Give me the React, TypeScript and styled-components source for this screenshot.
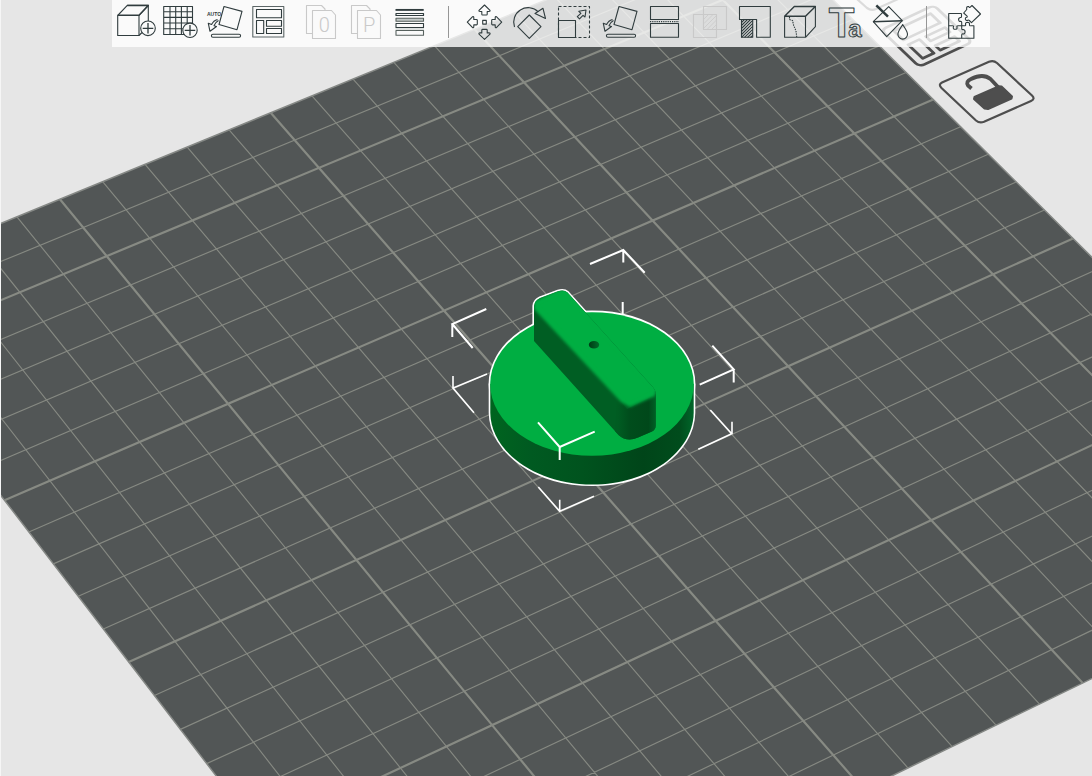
import React from "react";
import styled, { createGlobalStyle, css } from "styled-components";

const GlobalStyle = createGlobalStyle`
  * { box-sizing: border-box; }
  body {
    margin: 0;
    background: #e6e6e6;
    font-family: "Liberation Sans", Arial, sans-serif;
  }
`;

const Workspace = styled.main`
  display: grid;
  grid-template: minmax(100vh, auto) / minmax(0, 1fr);
  overflow: hidden;
  border-left: 1px solid #f6f6f6;
`;

const Viewport = styled.svg`
  grid-area: 1 / 1;
  display: block;
  width: 100%;
  height: 100vh;
`;

const Header = styled.header`
  grid-area: 1 / 1;
  align-self: start;
  z-index: 1;
  display: flex;
  justify-content: center;
  padding-left: 9px;
`;

const Toolbar = styled.div`
  display: flex;
  align-items: center;
  height: 47px;
  padding: 0 5px 0 1px;
  background: rgba(255, 255, 255, 0.8);
`;

const ToolGroup = styled.div<{ $spaced?: boolean }>`
  display: flex;
  margin-left: ${(p) => (p.$spaced ? "6px" : "0")};
`;

const ToolButton = styled.button`
  width: 45px;
  height: 47px;
  padding: 0;
  border: 0;
  background: none;
  color: #303c3e;
  cursor: pointer;
  &:disabled {
    color: #c9c9c9;
    cursor: default;
  }
`;

const Divider = styled.div`
  width: 28px;
  height: 32px;
  margin-bottom: 3px;
  display: flex;
  justify-content: center;
  &::before {
    content: "";
    width: 1px;
    background: #969696;
  }
`;

const Glyph = styled.svg`
  display: block;
  fill: none;
  stroke: currentColor;
  stroke-width: 1.1;
  stroke-linejoin: round;
  text {
    font-family: "Liberation Sans", Arial, sans-serif;
  }
`;

const SheetLetter = styled.text`
  && {
    font-family: Roboto, sans-serif;
  }
  font-weight: 300;
  font-size: 20px;
  text-anchor: middle;
  fill: currentColor;
  stroke: none;
`;

const line = css`
  fill: none;
`;
const MinorLine = styled.path`
  ${line}
  stroke: #868982;
  stroke-width: 1.15;
`;
const MajorLine = styled.path`
  ${line}
  stroke: #878a83;
  stroke-width: 2.2;
`;
const Bracket = styled.path<{ $thin?: boolean }>`
  ${line}
  stroke: #ffffff;
  stroke-width: ${(p) => (p.$thin ? 1.6 : 2)};
`;
const PlateMark = styled.g`
  fill: none;
  stroke: #4e4e4e;
  stroke-linejoin: round;
`;

/* ---------- build plate projection ---------- */

const CELLS = 22;
type Sample = [number, number, number, number];

// plate cell (u, v) -> scene position (x, y)
const SAMPLES: Sample[] = [
  [5, 0, 59.3, 199.3], [10, 0, 271, 113.3],
  [5, 2, 106.7, 256], [10, 2, 319, 167.7], [15, 2, 524, 82.7],
  [0, 7, 5, 499.7], [5, 7, 227.7, 403.7], [15, 7, 652.7, 220.7], [20, 7, 854.7, 133.7], [22, 7, 932.7, 99.3],
  [0, 12, 129.3, 662.3], [5, 12, 356, 559.7], [15, 12, 788.7, 365.7], [20, 12, 993, 274.3], [22, 12, 1073, 238.3],
  [5, 17, 491.7, 725.7], [10, 17, 715.7, 621], [15, 17, 932, 520.3],
  [15, 22, 1082, 683],
];

function fitProjection(samples: Sample[]) {
  const m = Array.from({ length: 8 }, () => new Array(9).fill(0));
  const add = (row: number[], rhs: number) => {
    for (let i = 0; i < 8; i++) {
      for (let j = 0; j < 8; j++) m[i][j] += row[i] * row[j];
      m[i][8] += row[i] * rhs;
    }
  };
  samples.forEach(([a, b, px, py]) => {
    const u = a / CELLS, v = b / CELLS, x = px / 1000, y = py / 1000;
    add([u, v, 1, 0, 0, 0, -u * x, -v * x], x);
    add([0, 0, 0, u, v, 1, -u * y, -v * y], y);
  });
  for (let c = 0; c < 8; c++) {
    let p = c;
    for (let r = c + 1; r < 8; r++) if (Math.abs(m[r][c]) > Math.abs(m[p][c])) p = r;
    [m[c], m[p]] = [m[p], m[c]];
    for (let r = 0; r < 8; r++) {
      if (r === c) continue;
      const f = m[r][c] / m[c][c];
      for (let k = c; k < 9; k++) m[r][k] -= f * m[c][k];
    }
  }
  const h = m.map((row, i) => row[8] / row[i]);
  return (a: number, b: number) => {
    const u = a / CELLS, v = b / CELLS;
    const w = h[6] * u + h[7] * v + 1;
    const x = (1000 * (h[0] * u + h[1] * v + h[2])) / w;
    const y = (1000 * (h[3] * u + h[4] * v + h[5])) / w;
    return `${x.toFixed(2)} ${y.toFixed(2)}`;
  };
}

const at = fitProjection(SAMPLES);
const steps = Array.from({ length: CELLS - 1 }, (_, i) => i + 1);
const across = (v: number) => `M${at(0, v)}L${at(CELLS, v)}`;
const along = (u: number) => `M${at(u, 0)}L${at(u, CELLS)}`;
const minorGrid = steps.map((i) => (i % 5 !== 2 ? across(i) : "") + (i % 5 !== 0 ? along(i) : "")).join("");
const majorGrid = steps.map((i) => (i % 5 === 2 ? across(i) : "") + (i % 5 === 0 ? along(i) : "")).join("");
const plateOutline = `M${at(0, 0)}L${at(CELLS, 0)}L${at(CELLS, CELLS)}L${at(0, CELLS)}Z`;

function Plate() {
  return (
    <g>
      <path d={plateOutline} fill="#525656" />
      <MinorLine d={minorGrid} />
      <MajorLine d={majorGrid} />
      <path d={plateOutline} fill="none" stroke="#858885" strokeWidth="1.5" />
    </g>
  );
}

function PlateMarks() {
  return (
    <PlateMark>
      <path d="M838 -18L867 8Q871 11 876 9L907 -5" strokeWidth="2.2" />
      <g transform="matrix(1.6 -0.75 1.2 1.15 881 30)" strokeWidth="1.7">
        <rect x="0" y="0" width="33" height="32" rx="3" />
        <rect x="5" y="4" width="23" height="8" />
        <rect x="5" y="16" width="7" height="12" />
        <rect x="16" y="16" width="12" height="4" />
        <rect x="16" y="24" width="12" height="4" />
      </g>
      <path
        d="M942 82.5L989 61.8Q993.5 60 997 63L1032 95.5Q1035.5 99 1031 101L984 121.8Q979.5 123.5 976 120.5L941.5 88Q938 84.5 942 82.5Z"
        fill="#e9e9e9"
        strokeWidth="2.2"
      />
      <path d="M971.5 88.5L968 85.5Q965.5 81.5 971 79Q983 73 990.5 79L998 87" strokeWidth="3.8" />
      <path d="M974.5 97L998.5 86.3L1001.5 86.5L1012 96.5L1011.5 98.5L988 109L984.5 108.5L974 99Z" fill="#4e4e4e" strokeWidth="2" />
    </PlateMark>
  );
}

/* ---------- selected model ---------- */

const HANDLE =
  "M534 341V306Q534.5 300.5 540 298L558 291.3Q564 289.5 567.5 292.5L651 385Q655.7 389.5 655.7 394V425.5Q655.7 429.5 652 431.5L638 437.5Q627 442.5 618.5 435Z";
const DISC_SIDE =
  "M490.3 384V413C491 452 536 484.5 592.3 484.5S693 452 693.7 413V384Z";

function Model() {
  return (
    <g>
      <defs>
        <linearGradient id="disc-side" x1="0" x2="1" y1="0" y2="0">
          <stop offset="0" stopColor="#00641f" />
          <stop offset="0.2" stopColor="#005a21" />
          <stop offset="0.45" stopColor="#00531e" />
          <stop offset="0.75" stopColor="#004519" />
          <stop offset="0.93" stopColor="#004c1c" />
          <stop offset="1" stopColor="#00662a" />
        </linearGradient>
        <linearGradient id="handle-end" x1="618" x2="656" y1="0" y2="0" gradientUnits="userSpaceOnUse">
          <stop offset="0" stopColor="#005c22" />
          <stop offset="0.3" stopColor="#004d1c" />
          <stop offset="0.8" stopColor="#00481a" />
          <stop offset="1" stopColor="#006126" />
        </linearGradient>
        <linearGradient id="hole" x1="0" x2="1" y1="0" y2="0">
          <stop offset="0" stopColor="#003a15" />
          <stop offset="1" stopColor="#006b29" />
        </linearGradient>
        <filter id="bevel" x="-10%" y="-10%" width="120%" height="120%">
          <feGaussianBlur stdDeviation="1.8" />
        </filter>
        <clipPath id="handle-shape">
          <path d={HANDLE} />
        </clipPath>
      </defs>
      <g fill="#fff" stroke="#fff" strokeWidth="3.2" strokeLinejoin="round">
        <path d={DISC_SIDE} />
        <ellipse cx="592" cy="384" rx="101.8" ry="72" />
        <path d={HANDLE} />
      </g>
      <path d={DISC_SIDE} fill="url(#disc-side)" />
      <ellipse cx="592" cy="384" rx="101.8" ry="71.8" fill="#00ae42" />
      <path d={HANDLE} fill="#005e23" />
      <g clipPath="url(#handle-shape)">
        <path d="M617 397L627 409L660 392V445H614Z" fill="url(#handle-end)" />
        <path
          d="M534 301L558 290L570 289L657 388L655 396L630 407L621 402L534 309Z"
          fill="#00ae42"
          filter="url(#bevel)"
        />
        <path d="M562 293L651 391L628 402L540 305Z" fill="#00ae42" />
      </g>
      <ellipse cx="594" cy="344.7" rx="5.2" ry="3.8" fill="url(#hole)" />
    </g>
  );
}

function BracketsBehind() {
  return (
    <g>
      <Bracket d="M590 264L623.3 250L644.7 272.7M623.3 250V262.5" />
      <Bracket d="M622.7 302V315" />
      <Bracket d="M486.3 309L452.3 324L472.7 348M452.3 324V337" />
      <Bracket $thin d="M487 374L453 388L474 412.7M453 388V376" />
      <Bracket d="M712.3 345.7L733.7 369.3L699.7 384.7M733.7 369.3V382.5" />
      <Bracket $thin d="M710.3 410L731.7 433.7L698.3 449.3M732 433.7V421.7" />
      <Bracket $thin d="M538.3 487L559.7 511.3L594 496.3M559.7 511.3V499.7" />
    </g>
  );
}

function Scene() {
  return (
    <Viewport viewBox="1 0 1091 776" preserveAspectRatio="xMidYMid slice" role="img" aria-label="Build plate with selected model">
      <rect x="-2000" y="-2000" width="5000" height="5000" fill="#e6e6e6" />
      <Plate />
      <PlateMarks />
      <BracketsBehind />
      <Model />
      <Bracket d="M538 422.3L559.7 447L594.7 431.7M559.7 447V460" />
    </Viewport>
  );
}

/* ---------- toolbar icons, drawn on a 45 x 47 field ---------- */

const AddCube = () => (
  <>
    <path d="M26 15.5V35.5H4.7V15.5L14.3 5.4H35.3L26 15.5Z" />
    <path d="M4.7 15.3H26L35.3 5.4H14.3" strokeWidth="1.5" />
    <path d="M35.3 5.4V21M26 35.5L29 32.5" />
    <circle cx="35" cy="28.3" r="7.3" />
    <path d="M35 23V33.6M29.7 28.3H40.3" strokeWidth="1.3" />
  </>
);

const AddPlate = () => (
  <>
    <path d="M5.7 6.5H34.5V34.5H5.7ZM12 6.5V34.5M17.7 6.5V34.5M23.4 6.5V34.5M29.2 6.5V34.5M5.7 11.7H34.5M5.7 17.4H34.5M5.7 23H34.5M5.7 28.7H34.5" />
    <circle cx="32" cy="30.3" r="7.2" fill="#fafafa" />
    <path d="M32 25V35.6M26.7 30.3H37.3" strokeWidth="1.3" />
  </>
);

const LayFlat = () => (
  <>
    <path d="M21 6.5L39 11.4L34 29.7L16 24.5Z" />
    <path d="M14.5 19.5Q10.5 20.5 8.6 24.5L5.3 23.3L7 31.3L13.5 26.5L11 25.7Q12 22.5 15.5 20.5" />
    <rect x="8.4" y="34.3" width="29.2" height="3" rx="1.5" />
  </>
);

const AutoOrient = () => (
  <>
    <text x="4" y="15.5" fontSize="5" fontWeight="700" fill="currentColor" stroke="none">AUTO</text>
    <LayFlat />
  </>
);

const Arrange = () => (
  <>
    <rect x="4.8" y="6.5" width="31" height="30.5" stroke="#5b6566" />
    <rect x="8.5" y="9.5" width="25" height="8.2" />
    <rect x="8.5" y="20.5" width="7.2" height="13" />
    <rect x="18.5" y="20.5" width="15" height="5.8" />
    <rect x="18.5" y="28.5" width="15" height="5" />
  </>
);

const Sheets = ({ letter }: { letter: string }) => (
  <>
    <path d="M13.5 33.5H7.5V5.5H22.5L26 9V10.5" />
    <path d="M13.5 10.5H32.5L36.5 15V38.5H13.5Z" />
    <SheetLetter x="25.2" y="32.3">{letter}</SheetLetter>
  </>
);

const LayerHeights = () => (
  <>
    <path d="M6.5 9.9H34.7" strokeWidth="1.9" />
    <rect x="7" y="13.5" width="27.5" height="2" strokeWidth="1.2" />
    <rect x="7" y="18.3" width="27.5" height="3" stroke="#58625f" fill="#c4cbc9" />
    <rect x="7" y="23.5" width="27.5" height="4" />
    <path d="M6.5 29H35" stroke="#c4cbc9" />
    <rect x="7" y="30.5" width="27.5" height="4.7" stroke="#58625f" />
  </>
);

const Move = () => (
  <>
    <rect x="20.7" y="20.4" width="3.6" height="3.7" />
    {[0, 90, 180, 270].map((a) => (
      <path
        key={a}
        transform={`rotate(${a} 22.5 22.2)`}
        d="M22.5 5L28 10.3Q28.4 11.5 27 11.5H25.2V14.2Q25.2 15 24.4 15H20.6Q19.8 15 19.8 14.2V11.5H18Q16.6 11.5 17 10.3Z"
      />
    ))}
  </>
);

const Rotate = () => (
  <>
    <path d="M22.3 15L34 26.7L22.3 38.3L10.7 26.7Z" />
    <path d="M7.5 27A14.5 14.5 0 0 1 31.3 11.8" />
    <path d="M28 13.5L36 8.3L38.5 18.5Z" />
  </>
);

const Scale = () => (
  <>
    <rect x="6.5" y="6.5" width="31" height="31" strokeDasharray="3 2" />
    <rect x="6.5" y="20.5" width="17" height="17" />
    <path d="M25.3 16.7L28.9 13.3L26.8 11.3L34 10L33 17L31 15.3L27.5 18.9Z" />
  </>
);

const PlaceOnFace = () => (
  <g transform="translate(1 0)">
    <LayFlat />
  </g>
);

const Cut = () => (
  <>
    <rect x="8.5" y="6.5" width="28" height="13" />
    <rect x="8.5" y="23.5" width="28" height="13.7" />
    <path d="M8 21.6H37" strokeDasharray="1.2 1" />
  </>
);

const MeshBoolean = () => (
  <>
    <rect x="16.5" y="6.5" width="23" height="23" />
    <rect x="6.5" y="14.5" width="23" height="23" />
    <path
      strokeWidth="0.8"
      d="M17 19L21.5 14.5M17 23.5L26 14.5M17 28L29.5 15.5M20 29.5L29.5 20M24.5 29.5L29.5 24.5"
    />
  </>
);

const Supports = () => (
  <>
    <path d="M7.5 6.5H38.3V37.3H24.6V19.5H7.5Z" />
    <path d="M9.5 19.5V37.3H20.7V19.5" />
    <path d="M9.5 22.5L12.5 19.5M9.5 25.5L15.5 19.5M9.5 28.5L18.5 19.5M9.5 31.5L20.7 20.3M9.5 34.5L20.7 23.3M9.5 37.3L20.7 26.3M12.5 37.3L20.7 29.3M15.5 37.3L20.7 32.3M18.5 37.3L20.7 35.3" />
  </>
);

const Seam = () => (
  <>
    <path d="M28.5 16.5V37.3H7.6V16.5M28.5 37.3L38.4 26.7V6.5" />
    <path d="M7.6 16.3L17.3 6.5H38.4L28.5 16.3Z" strokeWidth="1.4" />
    <path d="M12.5 17V19.5L15.5 20.5L16.7 25.5L19 31L19.7 37" strokeDasharray="1.4 1" />
  </>
);

const TextTool = () => (
  <text x="6.7" y="36.8" fontSize="42" fontWeight="700" strokeWidth="1">
    T
    <tspan dx="-6" fontSize="24">a</tspan>
  </text>
);

const Paint = () => (
  <>
    <path d="M6.3 21.7L21.7 6.7L35.3 20.7L19.7 36.7Z" />
    <path d="M6.3 21.7L35.3 20.7" strokeWidth="1.5" />
    <path d="M9.3 5.3L21 16.7" strokeWidth="2.5" />
    <path d="M35.7 24.5C33 29 30.9 31.5 30.9 34.3A4.8 4.8 0 0 0 40.5 34.3C40.5 31.5 38.4 29 35.7 24.5Z" />
  </>
);

const Assembly = () => (
  <>
    <path d="M21.5 13.5H8.7V38.3H33.9V25.7H30.5" />
    <path d="M8.7 25.7H12.5Q14 25.7 13.3 27.3Q13 29.3 15.2 29.3Q17.4 29.3 17 27.3Q16.5 25.7 18 25.7H21.7V28.5Q21.7 30 23.3 29.5Q25.5 30 25 32.5Q24.5 34.5 22.7 33.8Q21.7 33.8 21.7 35V38.3" />
    <path d="M21.5 13.5V16.5Q21.5 17.7 20.3 17.5Q18.3 18 18.6 20Q19 21.8 20.7 21.3Q21.7 21.3 21.7 22.5V25.7H25Q26 25.7 25.5 24.3Q25.3 22.5 27.5 22.3Q29.8 22.5 29.5 24.5Q29.3 25.7 30.5 25.7" />
    <path d="M32 5.5L40.5 14L31.5 22.7L29.3 20.5Q28.5 19.5 27.8 20.4Q25.7 21 25.3 19Q25.3 17.3 26.9 17.3Q27.7 16.7 26.8 15.8L23.7 13L26.3 10Q27.2 9 26.6 8.3Q26.7 6.1 28.7 6.5Q29.3 7.9 30 7.3Z" />
  </>
);

type Tool = { label: string; icon: React.ReactNode; disabled?: boolean };

const EDIT_TOOLS: Tool[] = [
  { label: "Add", icon: <AddCube /> },
  { label: "Add plate", icon: <AddPlate /> },
  { label: "Auto orient", icon: <AutoOrient /> },
  { label: "Arrange", icon: <Arrange /> },
];
const SPLIT_TOOLS: Tool[] = [
  { label: "Split to objects", icon: <Sheets letter="0" />, disabled: true },
  { label: "Split to parts", icon: <Sheets letter="P" />, disabled: true },
  { label: "Variable layer height", icon: <LayerHeights /> },
];
const MODEL_TOOLS: Tool[] = [
  { label: "Move", icon: <Move /> },
  { label: "Rotate", icon: <Rotate /> },
  { label: "Scale", icon: <Scale /> },
  { label: "Place on face", icon: <PlaceOnFace /> },
  { label: "Cut", icon: <Cut /> },
  { label: "Mesh boolean", icon: <MeshBoolean />, disabled: true },
  { label: "Support painting", icon: <Supports /> },
  { label: "Seam painting", icon: <Seam /> },
  { label: "Text", icon: <TextTool /> },
  { label: "Color painting", icon: <Paint /> },
];
const VIEW_TOOLS: Tool[] = [{ label: "Assembly view", icon: <Assembly /> }];

function Tools({ items, spaced }: { items: Tool[]; spaced?: boolean }) {
  return (
    <ToolGroup $spaced={spaced}>
      {items.map((t) => (
        <ToolButton key={t.label} type="button" aria-label={t.label} disabled={t.disabled}>
          <Glyph width="45" height="47" viewBox="0 0 45 47" aria-hidden="true">
            {t.icon}
          </Glyph>
        </ToolButton>
      ))}
    </ToolGroup>
  );
}

export default function App() {
  return (
    <>
      <GlobalStyle />
      <Workspace>
        <Scene />
        <Header>
          <Toolbar role="toolbar" aria-label="Model tools">
            <Tools items={EDIT_TOOLS} />
            <Tools items={SPLIT_TOOLS} spaced />
            <Divider />
            <Tools items={MODEL_TOOLS} />
            <Divider />
            <Tools items={VIEW_TOOLS} />
          </Toolbar>
        </Header>
      </Workspace>
    </>
  );
}
